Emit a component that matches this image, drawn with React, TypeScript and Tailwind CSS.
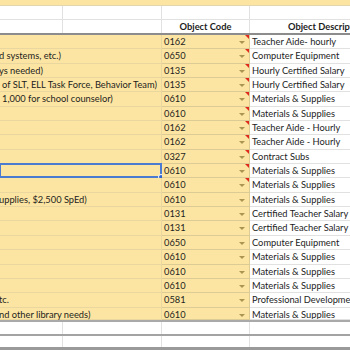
import React from "react";

type Row = { a: string; code: string; desc: string; note?: boolean; selected?: boolean; pad?: string };

const rows: Row[] = [
  { a: "", code: "0162", desc: "Teacher Aide- hourly", note: true },
  { a: "d systems, etc.)", code: "0650", desc: "Computer Equipment", note: true },
  { a: "ys needed)", code: "0135", desc: "Hourly Certified Salary", note: true },
  { a: "of SLT, ELL Task Force, Behavior Team)", code: "0135", desc: "Hourly Certified Salary", note: true, pad: "pl-[2px]" },
  { a: "1,000 for school counselor)", code: "0610", desc: "Materials & Supplies", note: true, pad: "pl-[2px]" },
  { a: "", code: "0610", desc: "Materials & Supplies", note: true },
  { a: "", code: "0162", desc: "Teacher Aide - Hourly", note: true },
  { a: "", code: "0162", desc: "Teacher Aide - Hourly", note: true },
  { a: "", code: "0327", desc: "Contract Subs", note: true },
  { a: "", code: "0610", desc: "Materials & Supplies", note: true, selected: true },
  { a: "", code: "0610", desc: "Materials & Supplies", note: true },
  { a: "upplies, $2,500 SpEd)", code: "0610", desc: "Materials & Supplies" },
  { a: "", code: "0131", desc: "Certified Teacher Salary" },
  { a: "", code: "0131", desc: "Certified Teacher Salary" },
  { a: "", code: "0650", desc: "Computer Equipment" },
  { a: "", code: "0610", desc: "Materials & Supplies" },
  { a: "", code: "0610", desc: "Materials & Supplies" },
  { a: "", code: "0610", desc: "Materials & Supplies" },
  { a: "tc.", code: "0581", desc: "Professional Development" },
  { a: "nd other library needs)", code: "0610", desc: "Materials & Supplies" },
];

const BlankRow = ({ last }: { last?: boolean }) => (
  <div className={`flex h-[14px] bg-white ${last ? "border-b-[3px] border-[#9a9a9a]" : "border-b-2 border-[#a3a3a3]"}`}>
    <div className="w-[63px] shrink-0 border-r border-[#e1e1e1]" />
    <div className="w-[99px] shrink-0 border-r border-[#e1e1e1]" />
    <div className="w-[88px] shrink-0 border-r border-[#e1e1e1]" />
    <div className="flex-1" />
  </div>
);

export default function App() {
  return (
    <div className="w-[350px] h-[350px] overflow-hidden bg-white text-[9.3px] text-[#1d1d1d]" style={{ fontFamily: "Lato, 'Open Sans', sans-serif" }}>
      {/* row above, cut off */}
      <div className="h-[6px] bg-[#fce5a2] border-b border-[#e3d6ad]" />

      <div className="flex h-[14px] bg-white border-b border-[#e1e1e1]">
        <div className="w-[63px] shrink-0 border-r border-[#e1e1e1]" />
        <div className="w-[99px] shrink-0 border-r border-[#e1e1e1]" />
        <div className="w-[88px] shrink-0 border-r border-[#e1e1e1]" />
        <div className="flex-1" />
      </div>

      {/* header */}
      <div className="flex h-[15px] bg-white border-b-2 border-[#8c8c8c] font-bold leading-[13px]">
        <div className="w-[63px] shrink-0 border-r border-[#e1e1e1]" />
        <div className="w-[99px] shrink-0 border-r border-[#e1e1e1]" />
        <div className="w-[88px] shrink-0 border-r border-[#e1e1e1] text-center">Object Code</div>
        <div className="flex-1 pl-[38px] whitespace-nowrap overflow-hidden">Object Description</div>
      </div>

      {rows.map((r, i) => (
        <div key={i} className={`flex h-[14.35px] leading-[13px] ${i === rows.length - 1 ? "border-b-2 border-[#a9a9a9]" : ""}`}>
          <div className="relative w-[162px] shrink-0 bg-[#fce5a2] border-r border-b border-[#ead7a0] whitespace-nowrap">
            <span className={`block overflow-hidden ${r.pad ?? "-ml-px"}`}>{r.a}</span>
            {r.selected && (
              <div className="absolute inset-[-1px] border-2 border-[#4a7bd0]">
                <div className="absolute -right-[4px] -bottom-[4px] w-[6px] h-[6px] rounded-full bg-[#2f64cf] border border-white" />
              </div>
            )}
          </div>
          <div className="relative w-[88px] shrink-0 bg-[#fce5a2] border-r border-b border-[#dccb95] pl-[2px]">
            {r.code}
            {r.note && (
              <div className="absolute right-0 top-0 w-0 h-0 border-t-[4px] border-l-[4px] border-t-[#e02a1c] border-l-transparent" />
            )}
            <div className="absolute right-[4px] top-[6px] w-0 h-0 border-t-[3px] border-x-[3px] border-t-[#a99452] border-x-transparent" />
          </div>
          <div className="flex-1 bg-white border-b border-[#e1e1e1] pl-[2px] whitespace-nowrap overflow-hidden">
            {r.desc}
          </div>
        </div>
      ))}

      <BlankRow />
      <BlankRow last />
    </div>
  );
}
